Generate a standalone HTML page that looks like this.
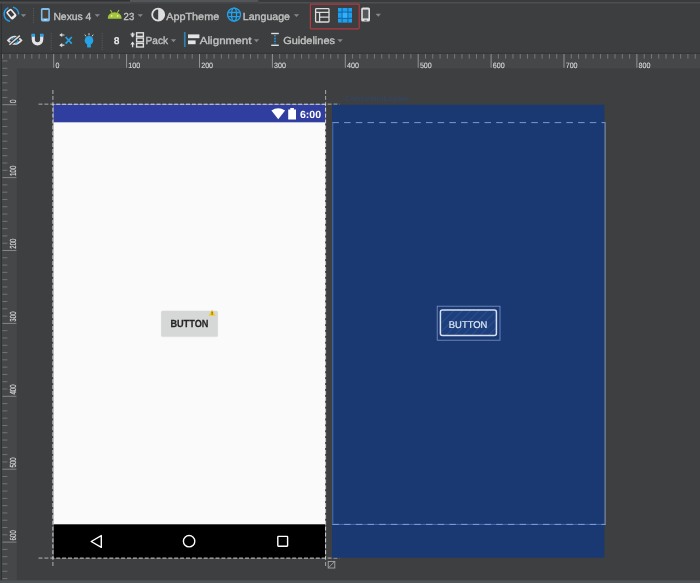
<!DOCTYPE html>
<html><head><meta charset="utf-8"><title>Layout Editor</title>
<style>
html,body{margin:0;padding:0;background:#3d3f40;width:700px;height:583px;overflow:hidden}
svg{display:block;will-change:transform;text-rendering:geometricPrecision;font-family:"Liberation Sans",sans-serif}
</style></head><body>
<svg width="700" height="583" viewBox="0 0 700 583">
<rect x="0" y="0" width="700" height="583" fill="#3d3f40"/>
<rect x="0" y="0" width="700" height="2.4" fill="#393b3d"/>
<rect x="0" y="2.3" width="700" height="1.2" fill="#56595b"/>
<rect x="0" y="0" width="130" height="1.6" fill="#303234"/>
<rect x="0" y="1.6" width="130" height="1.9" fill="#4c4e50"/>
<rect x="130" y="0" width="128.3" height="2.1" fill="#535557"/>
<rect x="130" y="2.1" width="128.3" height="1.6" fill="#444648"/>
<rect x="0" y="3.7" width="700" height="49.5" fill="#3c3e40"/>
<rect x="2" y="53.6" width="698" height="14.8" fill="#454749"/>
<rect x="2" y="53.6" width="14.8" height="527" fill="#454749"/>
<rect x="0" y="52.8" width="700" height="1" fill="#333537"/>
<rect x="0.9" y="3.7" width="1.1" height="580" fill="#2e3032"/>
<rect x="0" y="580.3" width="700" height="2.7" fill="#505355"/>
<path d="M2.67 54V58.6 M9.96 54V58.6 M17.25 54V58.6 M24.54 54V58.6 M31.83 54V58.6 M39.12 54V58.6 M46.41 54V58.6 M60.99 54V58.6 M68.28 54V58.6 M75.57 54V58.6 M82.86 54V58.6 M90.15 54V58.6 M97.44 54V58.6 M104.73 54V58.6 M112.02 54V58.6 M119.31 54V58.6 M133.89 54V58.6 M141.18 54V58.6 M148.47 54V58.6 M155.76 54V58.6 M163.05 54V58.6 M170.34 54V58.6 M177.63 54V58.6 M184.92 54V58.6 M192.21 54V58.6 M206.79 54V58.6 M214.08 54V58.6 M221.37 54V58.6 M228.66 54V58.6 M235.95 54V58.6 M243.24 54V58.6 M250.53 54V58.6 M257.82 54V58.6 M265.11 54V58.6 M279.69 54V58.6 M286.98 54V58.6 M294.27 54V58.6 M301.56 54V58.6 M308.85 54V58.6 M316.14 54V58.6 M323.43 54V58.6 M330.72 54V58.6 M338.01 54V58.6 M352.59 54V58.6 M359.88 54V58.6 M367.17 54V58.6 M374.46 54V58.6 M381.75 54V58.6 M389.04 54V58.6 M396.33 54V58.6 M403.62 54V58.6 M410.91 54V58.6 M425.49 54V58.6 M432.78 54V58.6 M440.07 54V58.6 M447.36 54V58.6 M454.65 54V58.6 M461.94 54V58.6 M469.23 54V58.6 M476.52 54V58.6 M483.81 54V58.6 M498.39 54V58.6 M505.68 54V58.6 M512.97 54V58.6 M520.26 54V58.6 M527.55 54V58.6 M534.84 54V58.6 M542.13 54V58.6 M549.42 54V58.6 M556.71 54V58.6 M571.29 54V58.6 M578.58 54V58.6 M585.87 54V58.6 M593.16 54V58.6 M600.45 54V58.6 M607.74 54V58.6 M615.03 54V58.6 M622.32 54V58.6 M629.61 54V58.6 M644.19 54V58.6 M651.48 54V58.6 M658.77 54V58.6 M666.06 54V58.6 M673.35 54V58.6 M680.64 54V58.6 M687.93 54V58.6 M695.22 54V58.6" stroke="#808283" stroke-width="0.85" fill="none"/>
<path d="M2.4 60.96H7.4 M2.4 68.25H7.4 M2.4 75.54H7.4 M2.4 82.83H7.4 M2.4 90.12H7.4 M2.4 97.41H7.4 M2.4 111.99H7.4 M2.4 119.28H7.4 M2.4 126.57H7.4 M2.4 133.86H7.4 M2.4 141.15H7.4 M2.4 148.44H7.4 M2.4 155.73H7.4 M2.4 163.02H7.4 M2.4 170.31H7.4 M2.4 184.89H7.4 M2.4 192.18H7.4 M2.4 199.47H7.4 M2.4 206.76H7.4 M2.4 214.05H7.4 M2.4 221.34H7.4 M2.4 228.63H7.4 M2.4 235.92H7.4 M2.4 243.21H7.4 M2.4 257.79H7.4 M2.4 265.08H7.4 M2.4 272.37H7.4 M2.4 279.66H7.4 M2.4 286.95H7.4 M2.4 294.24H7.4 M2.4 301.53H7.4 M2.4 308.82H7.4 M2.4 316.11H7.4 M2.4 330.69H7.4 M2.4 337.98H7.4 M2.4 345.27H7.4 M2.4 352.56H7.4 M2.4 359.85H7.4 M2.4 367.14H7.4 M2.4 374.43H7.4 M2.4 381.72H7.4 M2.4 389.01H7.4 M2.4 403.59H7.4 M2.4 410.88H7.4 M2.4 418.17H7.4 M2.4 425.46H7.4 M2.4 432.75H7.4 M2.4 440.04H7.4 M2.4 447.33H7.4 M2.4 454.62H7.4 M2.4 461.91H7.4 M2.4 476.49H7.4 M2.4 483.78H7.4 M2.4 491.07H7.4 M2.4 498.36H7.4 M2.4 505.65H7.4 M2.4 512.94H7.4 M2.4 520.23H7.4 M2.4 527.52H7.4 M2.4 534.81H7.4 M2.4 549.39H7.4 M2.4 556.68H7.4 M2.4 563.97H7.4 M2.4 571.26H7.4 M2.4 578.55H7.4" stroke="#7a7c7d" stroke-width="0.85" fill="none"/>
<path d="M2.4 104.70H16.4 M2.4 177.60H16.4 M2.4 250.50H16.4 M2.4 323.40H16.4 M2.4 396.30H16.4 M2.4 469.20H16.4 M2.4 542.10H16.4" stroke="#909293" stroke-width="0.85" fill="none"/>
<path d="M53.70 54V67.8 M126.60 54V67.8 M199.50 54V67.8 M272.40 54V67.8 M345.30 54V67.8 M418.20 54V67.8 M491.10 54V67.8 M564.00 54V67.8 M636.90 54V67.8" stroke="#9a9c9d" stroke-width="0.9" fill="none"/>
<g font-size="7.7" fill="#dadada" stroke="#dadada" stroke-width="0.12">
<text x="55.40" y="67.5" textLength="3.9" lengthAdjust="spacingAndGlyphs">0</text>
<text x="128.30" y="67.5" textLength="11.9" lengthAdjust="spacingAndGlyphs">100</text>
<text x="201.20" y="67.5" textLength="11.9" lengthAdjust="spacingAndGlyphs">200</text>
<text x="274.10" y="67.5" textLength="11.9" lengthAdjust="spacingAndGlyphs">300</text>
<text x="347.00" y="67.5" textLength="11.9" lengthAdjust="spacingAndGlyphs">400</text>
<text x="419.90" y="67.5" textLength="11.9" lengthAdjust="spacingAndGlyphs">500</text>
<text x="492.80" y="67.5" textLength="11.9" lengthAdjust="spacingAndGlyphs">600</text>
<text x="565.70" y="67.5" textLength="11.9" lengthAdjust="spacingAndGlyphs">700</text>
<text x="638.60" y="67.5" textLength="11.9" lengthAdjust="spacingAndGlyphs">800</text>
<text transform="translate(16.1 103.00) rotate(-90)" font-size="8.8" stroke="#d8d8d8" stroke-width="0.15" textLength="3.5" lengthAdjust="spacingAndGlyphs">0</text>
<text transform="translate(16.1 175.90) rotate(-90)" font-size="8.8" stroke="#d8d8d8" stroke-width="0.15" textLength="10.3" lengthAdjust="spacingAndGlyphs">100</text>
<text transform="translate(16.1 248.80) rotate(-90)" font-size="8.8" stroke="#d8d8d8" stroke-width="0.15" textLength="10.3" lengthAdjust="spacingAndGlyphs">200</text>
<text transform="translate(16.1 321.70) rotate(-90)" font-size="8.8" stroke="#d8d8d8" stroke-width="0.15" textLength="10.3" lengthAdjust="spacingAndGlyphs">300</text>
<text transform="translate(16.1 394.60) rotate(-90)" font-size="8.8" stroke="#d8d8d8" stroke-width="0.15" textLength="10.3" lengthAdjust="spacingAndGlyphs">400</text>
<text transform="translate(16.1 467.50) rotate(-90)" font-size="8.8" stroke="#d8d8d8" stroke-width="0.15" textLength="10.3" lengthAdjust="spacingAndGlyphs">500</text>
<text transform="translate(16.1 540.40) rotate(-90)" font-size="8.8" stroke="#d8d8d8" stroke-width="0.15" textLength="10.3" lengthAdjust="spacingAndGlyphs">600</text>
</g>
<rect x="53.4" y="104.4" width="271.70000000000005" height="453.6" fill="#fafafa"/>
<rect x="53.4" y="104.4" width="271.70000000000005" height="17.89999999999999" fill="#303f9f"/>
<rect x="53.4" y="524.3" width="271.70000000000005" height="33.700000000000045" fill="#000"/>
<path d="M271.4 110.6 Q278.2 106.0 285.1 110.6 L278.25 119.2Z" fill="#fff"/>
<path d="M288.2 109.4H290.3V108.1H293.9V109.4H296V119.6H288.2Z" fill="#fff"/>
<text x="299.9" y="117.9" font-size="10.4" font-weight="bold" fill="#fff" textLength="21.2" lengthAdjust="spacingAndGlyphs">6:00</text>
<path d="M101.3 535.6V547.4L91.2 541.5Z" fill="none" stroke="#fff" stroke-width="1.4" stroke-linejoin="round"/>
<circle cx="189.1" cy="541.2" r="5.7" fill="none" stroke="#fff" stroke-width="1.4"/>
<rect x="277.8" y="536.4" width="9.8" height="9.8" rx="0.6" fill="none" stroke="#fff" stroke-width="1.4"/>
<rect x="160.9" y="311.2" width="57.2" height="26" rx="1.8" fill="#e9e9e9"/><rect x="161.2" y="310.8" width="56.6" height="25.6" rx="1.5" fill="#d6d7d7"/>
<text x="189.4" y="326.5" font-size="10.3" font-weight="bold" fill="#262626" stroke="#262626" stroke-width="0.25" text-anchor="middle" textLength="38" lengthAdjust="spacingAndGlyphs">BUTTON</text>
<path d="M212.1 310.2L215.2 315.5H209Z" fill="#f4cc22" stroke="#f4cc22" stroke-width="0.5" stroke-linejoin="round"/>
<rect x="211.65" y="311.6" width="0.9" height="2.2" fill="#5a4a10"/><rect x="211.65" y="314.2" width="0.9" height="0.8" fill="#5a4a10"/>
<path d="M38.5 104.2H339.8 M38.5 558.1H339.8" stroke="#e4e4e4" stroke-width="0.9" stroke-dasharray="4 1.9" fill="none"/>
<path d="M52.9 90V566.2 M325.6 90V566.2" stroke="#e4e4e4" stroke-width="0.9" stroke-dasharray="4 1.9" fill="none"/>
<path d="M38 104.2H52.3 M326.2 104.2H340 M38 558.1H52.3 M326.2 558.1H340 M52.9 89.5V103.6 M325.6 89.5V103.6 M52.9 558.8V566.5 M325.6 558.8V566.5" stroke="#3c3f41" stroke-width="1.4" opacity="0.3"/>
<rect x="332.0" y="104.8" width="272.29999999999995" height="452.90000000000003" fill="#1a3973"/>
<path d="M332.8 524.4V122.6" stroke="#5a7fc0" stroke-width="0.9" fill="none" opacity="0.9"/>
<path d="M605.1 122.6V524.8" stroke="#7f98c8" stroke-width="1" fill="none"/>
<path d="M332.4 122.6H605.5" stroke="#88a2d6" stroke-width="0.9" stroke-dasharray="6.5 5.2" fill="none"/>
<path d="M332.4 524.4H605.5" stroke="#4a6fb4" stroke-width="0.9" fill="none"/>
<path d="M332.4 524.4H605.5" stroke="#86a3dc" stroke-width="0.9" stroke-dasharray="6.5 5.2" fill="none"/>
<text x="345" y="101" font-size="7.3" fill="#2c4a80" opacity="0.75" textLength="64" lengthAdjust="spacingAndGlyphs">ConstraintLayout</text>
<defs><pattern id="h" width="6" height="6" patternUnits="userSpaceOnUse" patternTransform="rotate(-45)"><rect width="6" height="6" fill="#1d3f7c"/><rect width="6" height="0.6" fill="#35569a"/></pattern></defs>
<rect x="437.2" y="306.2" width="62.8" height="34" fill="none" stroke="#8ea5d6" stroke-width="0.8" opacity="0.85"/>
<rect x="440.4" y="310" width="56" height="25.4" rx="2" fill="url(#h)" stroke="#d6dff2" stroke-width="1.5"/>
<text x="468.1" y="327.9" font-size="9.8" fill="#e2e9f8" stroke="#e2e9f8" stroke-width="0.2" text-anchor="middle" textLength="38.6" lengthAdjust="spacingAndGlyphs">BUTTON</text>
<rect x="328.2" y="561.4" width="6.6" height="6.6" fill="none" stroke="#a8a8a8" stroke-width="0.9"/><path d="M328.6 567.6L334.4 561.8" stroke="#a8a8a8" stroke-width="0.9"/>
<g font-size="10.3" fill="#c2c2c2" stroke="#c2c2c2" stroke-width="0.35">
<text x="53.4" y="19.8" textLength="38" lengthAdjust="spacingAndGlyphs">Nexus 4</text>
<text x="123.6" y="19.8" textLength="10.6" lengthAdjust="spacingAndGlyphs">23</text>
<text x="166.2" y="19.8" textLength="53" lengthAdjust="spacingAndGlyphs">AppTheme</text>
<text x="242.8" y="19.8" textLength="47.2" lengthAdjust="spacingAndGlyphs">Language</text>
<text x="145.6" y="44.2" textLength="22.4" lengthAdjust="spacingAndGlyphs">Pack</text>
<text x="199.8" y="44.2" textLength="51.6" lengthAdjust="spacingAndGlyphs">Alignment</text>
<text x="283.2" y="44.2" textLength="51.8" lengthAdjust="spacingAndGlyphs">Guidelines</text>
</g>
<text x="114" y="44.1" font-size="9.6" fill="#ececec" stroke="#ececec" stroke-width="0.45">8</text>
<path d="M20.8 14.2h5.4l-2.7 2.9z" fill="#85888a"/>
<path d="M94.6 14.2h5.4l-2.7 2.9z" fill="#85888a"/>
<path d="M137.6 14.2h5.4l-2.7 2.9z" fill="#85888a"/>
<path d="M293.8 14.2h5.4l-2.7 2.9z" fill="#85888a"/>
<path d="M375.6 13.8h5.4l-2.7 2.9z" fill="#85888a"/>
<path d="M170.79999999999998 39.3h5.4l-2.7 2.9z" fill="#85888a"/>
<path d="M253.79999999999998 39.3h5.4l-2.7 2.9z" fill="#85888a"/>
<path d="M337.40000000000003 39.3h5.4l-2.7 2.9z" fill="#85888a"/>
<path d="M33.6 8V24" stroke="#5c5f61" stroke-width="1" stroke-dasharray="1 1.3"/>
<path d="M51.2 33V50" stroke="#5c5f61" stroke-width="1" stroke-dasharray="1 1.3"/>
<path d="M102.2 33V50" stroke="#5c5f61" stroke-width="1" stroke-dasharray="1 1.3"/>
<g transform="translate(11.4 14.1) rotate(-40)"><rect x="-2.6" y="-4.15" width="5.2" height="8.3" rx="1" fill="#3a3a3c" stroke="#ececec" stroke-width="1.6"/><rect x="-2.6" y="2.4" width="5.2" height="1.8" fill="#ececec"/></g>
<path d="M8.36 7.67A7.2 7.2 0 0 0 10.15 21.29M12.90 7.16A7.2 7.2 0 0 1 18.60 14.45" fill="none" stroke="#2b9ae0" stroke-width="1.5"/>
<rect x="40.9" y="8" width="9" height="13.4" rx="1.6" fill="#7fbdf0"/><rect x="42.5" y="10" width="5.8" height="8.4" fill="#4a4236"/><rect x="44.2" y="19.3" width="2.4" height="1" fill="#dfeefa"/>
<path d="M107.9 18.7V17.6A6.8 5.4 0 0 1 121.5 17.6V18.7Z" fill="#a4c639"/><path d="M110.4 10l1.7 2.8M119 10l-1.7 2.8" stroke="#a4c639" stroke-width="1.1"/><circle cx="111.7" cy="15.9" r="0.8" fill="#eef4d4"/><circle cx="117.7" cy="15.9" r="0.8" fill="#eef4d4"/>
<circle cx="158.2" cy="14.7" r="6" fill="none" stroke="#dedede" stroke-width="1.8"/><path d="M158.2 8.7A6 6 0 0 1 158.2 20.7Z" fill="#dedede"/>
<g fill="none" stroke="#22a2ec" stroke-width="1.35"><circle cx="234.05" cy="14.6" r="6.5"/><ellipse cx="234.05" cy="14.6" rx="2.5" ry="6.5"/><path d="M228.2 12.5H239.9M228.2 16.6H239.9"/></g>
<rect x="310.4" y="4.2" width="48.8" height="24.6" rx="0.8" fill="none" stroke="#b5393f" stroke-width="1.2"/>
<g fill="none" stroke="#dcdcdc" stroke-width="1.3"><rect x="315.6" y="8.6" width="13.4" height="13.4" rx="0.8"/><path d="M315.6 12.4H329M319.6 12.4V22M319.6 17.2H329"/></g>
<rect x="338" y="8" width="14" height="14.6" fill="#1fa0ee"/><path d="M342.1 8V22.6M347.9 8V22.6M338 12.1H352M338 18.4H352" stroke="#176aa6" stroke-width="1.2"/><rect x="342.7" y="12.7" width="4.6" height="5.1" fill="#35b0f6"/>
<rect x="361.2" y="7.6" width="8.8" height="14" rx="1.6" fill="#e0e0e0"/><rect x="362.8" y="9.6" width="5.6" height="8.8" fill="#55585a"/><rect x="364.4" y="19.8" width="2.4" height="1" fill="#777"/>
<g fill="none" stroke="#dcdcdc" stroke-width="1.8"><path d="M8 40.3Q14.7 33 21.4 40.3Q14.7 47.6 8 40.3Z"/></g><path d="M8.6 45.8L20.6 35" stroke="#3c3e40" stroke-width="3.4"/><path d="M9.4 44.8L19.8 35.6" stroke="#dadada" stroke-width="1.5"/><path d="M15.2 43a2.8 2.8 0 0 0 2.6-2.6M11.8 40a2.8 2.8 0 0 1 2.4-2.4" stroke="#25a3e6" stroke-width="1.2" fill="none"/>
<path d="M33.3 34.2V39.6A4.2 4.2 0 0 0 41.7 39.6V34.2" fill="none" stroke="#e4e4e4" stroke-width="3.2"/><rect x="31.7" y="33.7" width="3.2" height="3.1" fill="#25a3e6"/><rect x="40.1" y="33.7" width="3.2" height="3.1" fill="#25a3e6"/>
<g stroke="#dcdcdc" stroke-width="1.2" fill="#dcdcdc"><path d="M61 35H64.4M61 45.2H64.4" fill="none"/><path d="M59.2 35L62.2 32.9V37.1ZM59.2 45.2L62.2 43.1V47.3Z" stroke="none"/></g><path d="M65.6 37L71.8 43.6M71.8 37L65.6 43.6" stroke="#25a3e6" stroke-width="1.7"/>
<circle cx="89" cy="40.4" r="4.3" fill="#25a3e6"/><rect x="87.1" y="43.6" width="3.8" height="3.9" rx="0.6" fill="#25a3e6"/><path d="M89 33.2v2.2M84.8 34.6l1.2 1.8M93.2 34.6l-1.2 1.8" stroke="#d4d4d4" stroke-width="1"/>
<g fill="none" stroke="#dedede" stroke-width="1.4"><rect x="136.6" y="32.8" width="6.8" height="3.6"/><rect x="136.6" y="38" width="6.8" height="3.8"/><rect x="136.6" y="43.4" width="6.8" height="3.6"/><path d="M132.6 32.4V36.6M130.6 34.2H134.6M132.6 42.6V47.2" stroke-width="1.3"/></g><path d="M130.6 35.2H134.6L132.6 37.4Z M130.4 44.4H134.8L132.6 41.6Z" fill="#dedede"/>
<rect x="183.9" y="32" width="1.7" height="15" fill="#3283b4"/><rect x="188" y="34.4" width="11.4" height="3.8" fill="#e4e4e4"/><rect x="188" y="40.4" width="7.6" height="3.8" fill="#e4e4e4"/>
<rect x="271.2" y="32.8" width="7.6" height="1.4" fill="#e0e0e0"/><rect x="271.2" y="44.6" width="7.6" height="1.4" fill="#e0e0e0"/><path d="M275 35V44.4" stroke="#2fa5ee" stroke-width="1.4" stroke-dasharray="1.6 1.2"/>
</svg>
</body></html>
